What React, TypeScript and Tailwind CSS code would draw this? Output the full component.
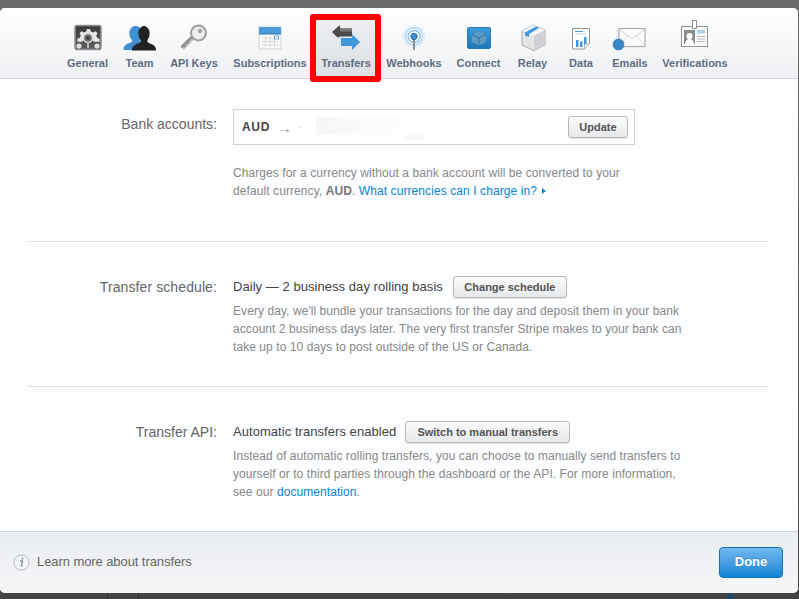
import React from "react";

function GeneralIcon() {
  return (
    <svg width="40" height="32" viewBox="0 0 40 32">
      <defs>
        <linearGradient id="gen" x1="0" y1="0" x2="0" y2="1">
          <stop offset="0" stopColor="#3a3a3a" />
          <stop offset="1" stopColor="#5f5f5f" />
        </linearGradient>
      </defs>
      <rect x="7" y="3.5" width="26" height="24" rx="2" fill="url(#gen)" stroke="#8b8f94" strokeWidth="1.5" />
      <path d="M20 7l2 0 .8 2.6 2.4 1 2.3-1.3 2 2-1.3 2.3 1 2.4 2.4.8v3h-6a6 6 0 0 0-11.2 0H9.4v-3l2.4-.8 1-2.4-1.3-2.3 2-2 2.3 1.3 2.4-1 .8-2.6z" fill="#e6e6e6" />
      <circle cx="20" cy="16" r="4.5" fill="#6a6a6a" stroke="#ddd" strokeWidth="1.5" />
      <circle cx="20" cy="16" r="1.6" fill="#333" />
      <rect x="19" y="20" width="2" height="6" fill="#bbb" />
      <circle cx="11" cy="24" r="2.6" fill="#ddd" />
      <circle cx="29" cy="24" r="2.6" fill="#ddd" />
    </svg>
  );
}

function TeamIcon() {
  return (
    <svg width="40" height="32" viewBox="0 0 40 32">
      <path d="M3.500 28c0-4 2-6 6-7 2-.6 3-1.500 2.500-3-2-2-3-5-2.500-8 .5-3.500 3-6 6-6s4 1 5 3l-1 21z" fill="#3d8fd1" />
      <path d="M12 28.500c0-4 2-5.500 6-7 2.500-1 3-2 2.500-3.500-1.500-2-2.500-5-2-8.500.5-3 3-5.500 5.500-5.500s5 2.500 5.500 5.500c.5 3.500-.5 6.500-2 8.500-.5 1.500 0 2.500 2.500 3.500 4 1.500 6 3 6 7z" fill="#222" />
    </svg>
  );
}

function KeyIcon() {
  return (
    <svg width="40" height="32" viewBox="0 0 40 32">
      <path d="M8 26l12-12" stroke="#929292" strokeWidth="4.500" />
      <path d="M8.500 27l12-12" stroke="#e8e8e8" strokeWidth="1" />
      <path d="M9 22l3 3M12 19l2.500 2.500" stroke="#929292" strokeWidth="2" />
      <circle cx="24.500" cy="11" r="7.500" fill="#ececec" stroke="#a0a0a0" strokeWidth="2" />
      <circle cx="26" cy="9" r="2.200" fill="#a3abb0" />
    </svg>
  );
}

function CalendarIcon() {
  return (
    <svg width="40" height="32" viewBox="0 0 40 32">
      <rect x="9" y="5" width="22" height="22" fill="#fbfbfb" stroke="#cfd3d6" />
      <rect x="9" y="5" width="22" height="7" fill="#4a9ad8" />
      <path d="M9 12h22" stroke="#2e78b3" />
      <path d="M12 16h16M12 19.500h16M12 23h16M15.500 14v11M20 14v11M24.500 14v11" stroke="#d8dbde" fill="none" />
      <rect x="24.500" y="14" width="4" height="3" fill="#fff" stroke="#6aa9da" />
    </svg>
  );
}

function TransfersIcon() {
  return (
    <svg width="40" height="32" viewBox="0 0 40 32">
      <path d="M6 10l8-7v3.500h12v8H14V18z" fill="#4a4a4a" />
      <path d="M14 6.500h12v3H14z" fill="#777" />
      <rect x="12" y="15" width="6" height="9" fill="#dfe7ef" />
      <path d="M34 20l-8 8v-4H15v-8h11v-4z" fill="#3f97dc" />
      <path d="M15 16h11v-4l2 2-2 1v1z" fill="#74b8ea" />
    </svg>
  );
}

function WebhooksIcon() {
  return (
    <svg width="40" height="32" viewBox="0 0 40 32">
      <circle cx="20" cy="14.500" r="11.500" fill="#e4f0fa" />
      <circle cx="20" cy="14.500" r="8.500" fill="#fff" stroke="#b5d6f0" strokeWidth="1.500" />
      <circle cx="20" cy="14.500" r="6" fill="#fff" stroke="#8cc0e9" strokeWidth="1.500" />
      <path d="M20 17v11" stroke="#8a8f94" strokeWidth="2" />
      <circle cx="20" cy="14.500" r="3.200" fill="#3f8fce" stroke="#2c6d9f" />
    </svg>
  );
}

function ConnectIcon() {
  return (
    <svg width="40" height="32" viewBox="0 0 40 32">
      <defs>
        <linearGradient id="con" x1="0" y1="0" x2="0" y2="1">
          <stop offset="0" stopColor="#3f9ada" />
          <stop offset="1" stopColor="#1f76b8" />
        </linearGradient>
      </defs>
      <rect x="8.500" y="5.500" width="23" height="21" rx="1.500" fill="url(#con)" stroke="#2b78b5" />
      <path d="M20 9l7 3.500v7.500l-7 3.500-7-3.500v-7.500z" fill="#5e9ac6" />
      <path d="M13 12.500l7 3.500 7-3.500M20 16v7.500" stroke="#2d6c9c" fill="none" />
    </svg>
  );
}

function RelayIcon() {
  return (
    <svg width="40" height="32" viewBox="0 0 40 32">
      <path d="M20 3l12 5v15l-11 5.500-12-5.500V9z" fill="#e4e5e7" stroke="#a7a9ab" />
      <path d="M21 13.500l11-5.500v15l-11 5.500z" fill="#cfd1d4" />
      <path d="M9 9l12 4.500 11-5.500L20 3z" fill="#f4f4f5" />
      <path d="M12 10.500l11-6 3 1.500-10 6v3l-4-1.500z" fill="#3f97dc" />
    </svg>
  );
}

function DataIcon() {
  return (
    <svg width="40" height="32" viewBox="0 0 40 32">
      <path d="M11.500 6.500h17v15l-5 5.500h-12z" fill="#fff" stroke="#8f9396" />
      <path d="M28.500 21.500l-5 .5v5" fill="#e7e7e7" stroke="#b5b8ba" />
      <path d="M14 9.500h8" stroke="#4a9ad8" strokeWidth="1.200" />
      <path d="M14 12h11" stroke="#bcd9ef" />
      <path d="M15 18h2.500v7H15zM19 19.500h2.500v5.500H19zM23 15h2.500v7H23z" fill="#3f97dc" />
    </svg>
  );
}

function EmailsIcon() {
  return (
    <svg width="40" height="32" viewBox="0 0 40 32">
      <path d="M6 7h3v18H6z" fill="#eceef0" />
      <rect x="9" y="6.500" width="26" height="18" fill="#fdfdfd" stroke="#a9adb0" strokeWidth="1.200" />
      <path d="M9 7l13 10L35 7M9 24l9-10M35 24l-9-10" stroke="#d0d3d5" fill="none" />
      <circle cx="8.500" cy="22.500" r="5.500" fill="#3688c9" stroke="#2a70a6" strokeWidth="0.600" />
    </svg>
  );
}

function VerificationsIcon() {
  return (
    <svg width="40" height="32" viewBox="0 0 40 32" className="overflow-visible">
      <rect x="6.500" y="4.500" width="26" height="20" fill="#fafafa" stroke="#8f9396" />
      <rect x="17.500" y="-1.500" width="4" height="8" fill="#fff" stroke="#8f9396" />
      <rect x="9" y="8" width="11" height="14" fill="#8b8b8b" />
      <path d="M10 22c0-3 2-4 3-4.500-1-1-1.500-2-1.500-3.500 0-2 1-3 3-3s3 1 3 3c0 1.500-.5 2.500-1.500 3.500 1 .5 3 1.500 3 4.500z" fill="#fff" />
      <rect x="22" y="8" width="8" height="3.500" fill="#a9d3f2" />
      <path d="M22 14.500h8M22 17h8M22 19.500h8" stroke="#b5b9bc" />
    </svg>
  );
}

const tabs = [
  { label: "General", width: "w-[59px]", icon: <GeneralIcon /> },
  { label: "Team", width: "w-[45px]", icon: <TeamIcon /> },
  { label: "API Keys", width: "w-[64px]", icon: <KeyIcon /> },
  { label: "Subscriptions", width: "w-[88px]", icon: <CalendarIcon /> },
  { label: "Transfers", width: "w-[64px]", icon: <TransfersIcon />, active: true },
  { label: "Webhooks", width: "w-[72px]", icon: <WebhooksIcon /> },
  { label: "Connect", width: "w-[57px]", icon: <ConnectIcon /> },
  { label: "Relay", width: "w-[51px]", icon: <RelayIcon /> },
  { label: "Data", width: "w-[46px]", icon: <DataIcon /> },
  { label: "Emails", width: "w-[52px]", icon: <EmailsIcon /> },
  { label: "Verifications", width: "w-[78px]", icon: <VerificationsIcon /> },
];

function GrayButton({ children, className }: { children: React.ReactNode; className: string }) {
  return (
    <button
      className={`h-[22px] rounded-[3px] border border-[#b4b8bc] bg-gradient-to-b from-[#fbfbfb] to-[#e6e8ea] text-[11px] font-bold text-[#555] shadow-[0_1px_1px_rgba(0,0,0,0.1)] ${className}`}
    >
      {children}
    </button>
  );
}

export default function App() {
  return (
    <div className="relative flex h-[599px] w-[799px] flex-col overflow-hidden bg-gradient-to-b from-[#6b6b6b] to-[#444] pb-[6px] pr-[1px] pt-2 font-['Liberation_Sans',Arial,sans-serif]">
      {/* Page behind the dialog, only its lower edge shows */}
      <div className="absolute bottom-0 left-[107px] h-[6px] w-px bg-[#333]" />
      <div className="absolute bottom-0 left-[138px] h-[6px] w-px bg-[#333]" />
      <div className="absolute bottom-0 left-[728px] h-[6px] w-[5px] bg-[#1d4a6b]" />

      <div className="relative flex flex-1 flex-col overflow-hidden rounded-[5px] bg-[#fcfdfe]">
        {/* Tabs */}
        <header className="flex h-[71px] shrink-0 items-end border-b border-[#d3d7dc] bg-gradient-to-b from-white to-[#eef0f3] pl-[58px]">
          {tabs.map((tab) => (
            <div
              key={tab.label}
              className={`flex h-[64px] shrink-0 flex-col items-center pt-[8px] ${tab.width} ${
                tab.active ? "bg-gradient-to-b from-[#eef0f2] to-[#dcdfe3]" : ""
              }`}
            >
              <div className="h-[32px] w-[40px]">{tab.icon}</div>
              <span className="mt-[1px] whitespace-nowrap text-[11px] font-bold leading-[16px] text-[#5f6c80]">
                {tab.label}
              </span>
            </div>
          ))}
        </header>

        {/* Body */}
        <main className="flex flex-1 flex-col pl-[28px] pr-[30px]">
          <section className="flex h-[163px] shrink-0 border-b border-[#e2e4e7] pt-[30px]">
            <div className="w-[189px] pt-[6px] text-right text-[14px] leading-[18px] text-[#666]">
              Bank accounts:
            </div>
            <div className="ml-[16px] w-[402px]">
              <div className="flex h-[36px] items-center border border-[#cfd1d3] bg-white pl-[8px] pr-[6px]">
                <span className="text-[12px] font-bold tracking-[0.7px] text-[#444]">AUD</span>
                <span className="ml-[7px] text-[15px] leading-none text-[#999]">→</span>
                <span className="ml-[7px] h-px w-px bg-[#bbb]" />
                <div className="ml-[16px] flex flex-1 flex-col pt-[3px]">
                  <div className="h-[18px] w-[92px] bg-gradient-to-r from-[#f7f7f7] to-[#fdfdfd]" />
                  <div className="ml-[89px] h-[5px] w-[19px] bg-[#f8f8f8]" />
                </div>
                <GrayButton className="w-[60px]">Update</GrayButton>
              </div>
              <p className="mt-[19px] w-[420px] text-[12px] leading-[18px] tracking-[0.085px] text-[#888]">
                Charges for a currency without a bank account will be converted to your default currency,{" "}
                <b className="text-[#777]">AUD</b>.{" "}
                <span className="text-[#0c84d0]">What currencies can I charge in?</span>
                <span className="relative bottom-[1px] ml-[5px] inline-block h-0 w-0 border-y-[3px] border-l-[4px] border-y-transparent border-l-[#0c84d0]" />
              </p>
            </div>
          </section>

          <section className="flex h-[145px] shrink-0 border-b border-[#e2e4e7] pt-[34px]">
            <div className="w-[189px] pt-[2px] text-right text-[14px] leading-[18px] tracking-[0.1px] text-[#666]">
              Transfer schedule:
            </div>
            <div className="ml-[16px] w-[455px]">
              <div className="flex h-[22px] items-center">
                <span className="text-[13px] tracking-[0.05px] text-[#444]">Daily — 2 business day rolling basis</span>
                <GrayButton className="ml-[10px] w-[114px]">Change schedule</GrayButton>
              </div>
              <p className="mt-[4px] text-[12px] leading-[18px] tracking-[0.07px] text-[#888]">
                Every day, we'll bundle your transactions for the day and deposit them in your bank account 2 business
                days later. The very first transfer Stripe makes to your bank can take up to 10 days to post outside of
                the US or Canada.
              </p>
            </div>
          </section>

          <section className="flex flex-1 pt-[34px]">
            <div className="w-[189px] pt-[2px] text-right text-[14px] leading-[18px] text-[#666]">
              Transfer API:
            </div>
            <div className="ml-[16px] w-[455px]">
              <div className="flex h-[22px] items-center">
                <span className="text-[13px] tracking-[0.05px] text-[#444]">Automatic transfers enabled</span>
                <GrayButton className="ml-[9px] w-[165px]">Switch to manual transfers</GrayButton>
              </div>
              <p className="mt-[4px] text-[12px] leading-[18px] tracking-[0.07px] text-[#888]">
                Instead of automatic rolling transfers, you can choose to manually send transfers to yourself or to
                third parties through the dashboard or the API. For more information, see our{" "}
                <span className="text-[#0c84d0]">documentation</span>.
              </p>
            </div>
          </section>
        </main>

        {/* Footer */}
        <footer className="flex h-[62px] shrink-0 items-center justify-between border-t border-[#cfd3d9] bg-gradient-to-b from-[#eaedf0] to-[#f5f6f8] pl-[13px] pr-[15px]">
          <div className="flex items-center pb-[1px]">
            <svg width="17" height="17" viewBox="0 0 17 17">
              <circle cx="8.500" cy="8.500" r="7.500" fill="#f3f5f7" stroke="#b3b8bd" />
              <path d="M7 7h2.500l-1 5h1" stroke="#8a9198" strokeWidth="1.400" fill="none" />
              <circle cx="9.500" cy="4.800" r="1" fill="#8a9198" />
            </svg>
            <span className="ml-[7px] text-[13px] tracking-[-0.08px] text-[#666]">Learn more about transfers</span>
          </div>
          <button className="mb-[1px] h-[31px] w-[64px] rounded-[4px] border border-[#1673b1] bg-gradient-to-b from-[#6fb9ee] to-[#0a83d6] text-[13px] font-bold text-white [text-shadow:0_-1px_0_rgba(0,0,0,0.2)]">
            Done
          </button>
        </footer>
      </div>

      {/* Annotation drawn over the active tab */}
      <div className="absolute left-[310px] top-[14px] h-[68px] w-[71px] rounded-[3px] border-[6px] border-[#f00]" />
    </div>
  );
}
